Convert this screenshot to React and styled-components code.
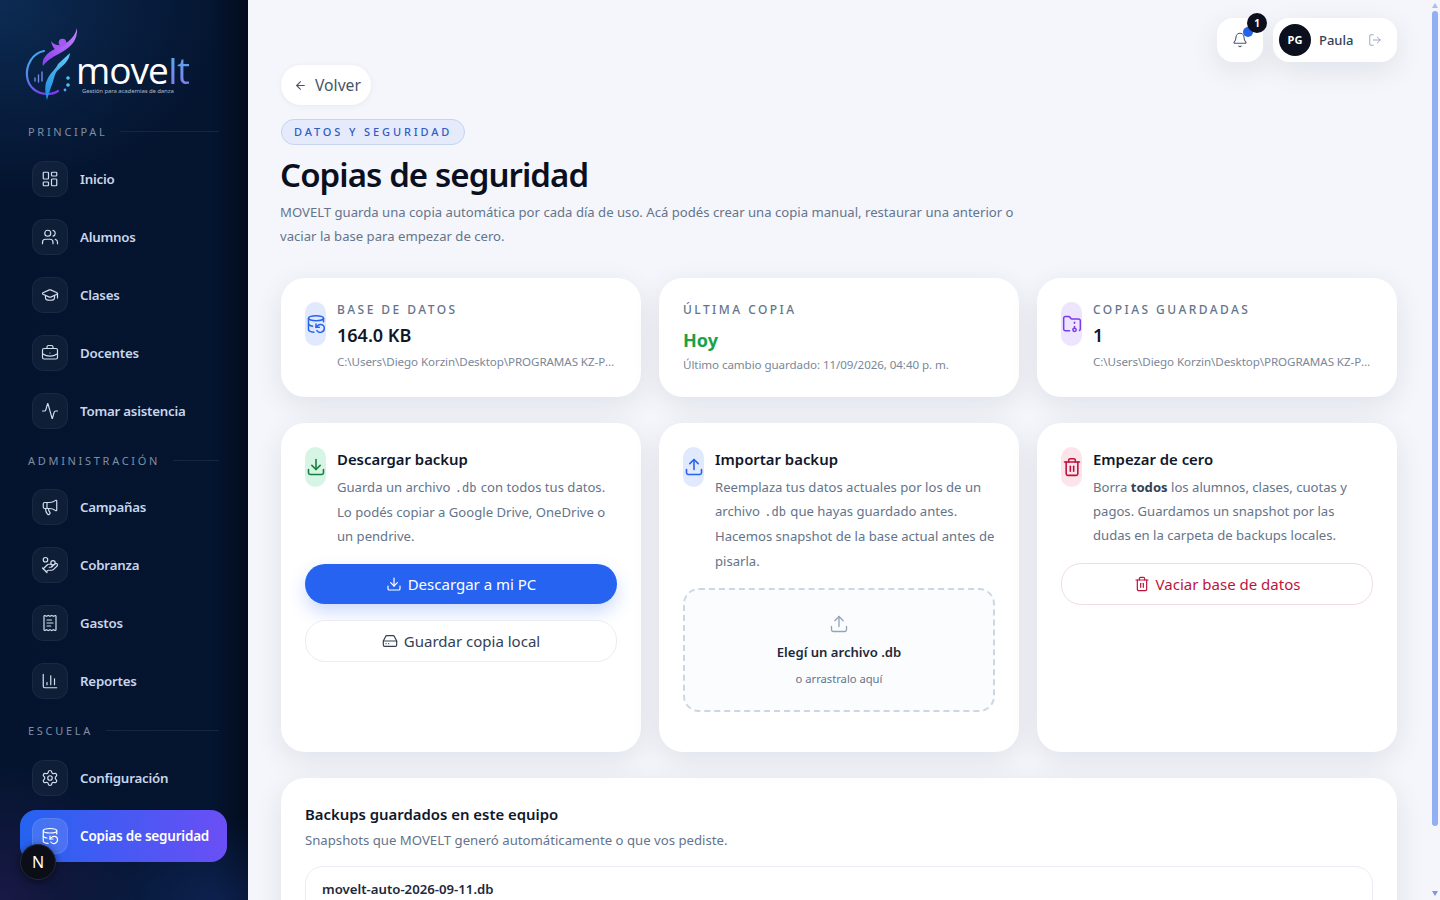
import React from "react";
import styled, { createGlobalStyle } from "styled-components";
import {
  LayoutDashboard, Users, GraduationCap, BriefcaseBusiness, Activity, Megaphone, HandCoins,
  ReceiptText, ChartColumn, Settings, DatabaseBackup, Bell, LogOut, ArrowLeft, Download,
  Upload, HardDrive, Trash2, FolderArchive,
} from "lucide-react";

const Global = createGlobalStyle`
  * { box-sizing: border-box; }
  html, body { margin: 0; height: 100%; overflow: hidden; }
  body { font-family: "Noto Sans", "Open Sans", sans-serif; background: #f4f6fb; color: #0f172a; }
`;

const Shell = styled.div`
  display: flex;
  height: 100vh;
  position: relative;
`;

const Sidebar = styled.aside`
  width: 248px;
  flex: none;
  height: 100vh;
  overflow: hidden;
  padding: 0 20px 0 20px;
  background:
    radial-gradient(220px 110px at 90% 100%, rgba(37, 70, 170, .26), transparent 75%),
    radial-gradient(170px 170px at 0% 100%, rgba(92, 42, 140, .24), transparent 80%),
    radial-gradient(280px 240px at 0% 0%, rgba(20, 66, 120, .50), transparent 80%),
    linear-gradient(90deg, #04142f 0%, #041530 85%, #020c1d 100%);
`;

const Brand = styled.div`
  height: 123px;
  margin: 0 -20px;
  padding: 26px 0 0 25px;
  display: flex;
  align-items: flex-start;
`;

const BrandMark = styled.svg`
  width: 56px;
  height: 76px;
  flex: none;
`;

const BrandWords = styled.div`
  margin: 25px 0 0 -5px;
  display: flex;
  flex-direction: column;
`;

const Wordmark = styled.div`
  font-family: "Open Sans", sans-serif;
  font-size: 37px;
  line-height: 38px;
  letter-spacing: -1px;
  color: #fff;
  font-weight: 500;
`;

const WordAccent = styled.span`
  background: linear-gradient(180deg, #45c0ee, #8f6bf2);
  -webkit-background-clip: text;
  background-clip: text;
  color: transparent;
`;

const Tagline = styled.div`
  font-size: 6px;
  line-height: 8px;
  margin: -2px 0 0 6px;
  letter-spacing: -.1px;
  color: #aeb8c9;
  white-space: nowrap;
`;

const SectionLabel = styled.div`
  display: flex;
  align-items: center;
  gap: 13px;
  height: 16px;
  margin: ${(p) => p.$mt}px 9px ${(p) => p.$mb}px 8px;
  font-size: 11px;
  letter-spacing: 2.7px;
  color: #7f8ea6;
  white-space: nowrap;
  &::after {
    content: "";
    flex: 1;
    height: 1px;
    background: #17263f;
  }
`;

const NavList = styled.nav`
  display: flex;
  flex-direction: column;
  gap: 6px;
`;

const NavItem = styled.div`
  height: 52px;
  width: 207px;
  padding: 0 12px;
  border-radius: 16px;
  display: flex;
  align-items: center;
  gap: 12px;
  font-size: ${(p) => (p.$active ? 13.5 : 13.3)}px;
  font-weight: 600;
  letter-spacing: -.22px;
  color: ${(p) => (p.$active ? "#fff" : "#c9d6ec")};
  background: ${(p) => (p.$active ? "linear-gradient(90deg, #2563f0, #6a4ff5)" : "transparent")};
`;

const NavIcon = styled.span`
  width: 36px;
  height: 36px;
  flex: none;
  border-radius: 12px;
  display: grid;
  place-items: center;
  background: ${(p) => (p.$active ? "rgba(255,255,255,.12)" : "rgba(255,255,255,.045)")};
  border: 1px solid ${(p) => (p.$active ? "rgba(255,255,255,.10)" : "rgba(255,255,255,.05)")};
  color: ${(p) => (p.$active ? "#fff" : "#d3ddee")};
`;

const DevBadge = styled.div`
  position: absolute;
  left: 20px;
  top: 844px;
  width: 36px;
  height: 36px;
  border-radius: 50%;
  background: #0b0d17;
  border: 1px solid #23283a;
  box-shadow: 0 2px 8px rgba(0, 0, 0, .5);
  color: #fff;
  display: grid;
  place-items: center;
  font-size: 16px;
`;

const Main = styled.main`
  flex: 1;
  min-width: 0;
  height: 100vh;
  overflow-y: auto;
  padding: 18px 43px 17px 32px;
`;

const ScrollTrack = styled.div`
  position: absolute;
  right: 0;
  top: 0;
  bottom: 0;
  width: 8px;
  display: flex;
  flex-direction: column;
  background: #f4f6fb;
  padding: 3px 2px 4px 0;
`;

const ScrollArrow = styled.span`
  flex: none;
  height: 5px;
  background: ${(p) => p.$color};
  clip-path: ${(p) => (p.$down ? "polygon(0 0, 100% 0, 50% 100%)" : "polygon(50% 0, 100% 100%, 0 100%)")};
`;

const ScrollThumb = styled.span`
  flex: none;
  height: 815px;
  margin-top: 3px;
  border-radius: 4px;
  background: #93aff3;
`;

const ScrollSpacer = styled.span`
  flex: 1;
`;

const TopBar = styled.div`
  display: flex;
  justify-content: flex-end;
  gap: 10px;
`;

const softShadow = "0 8px 30px rgba(15, 23, 42, .09)";

const BellButton = styled.div`
  position: relative;
  width: 46px;
  height: 44px;
  border-radius: 16px;
  background: #fff;
  box-shadow: ${softShadow};
  display: grid;
  place-items: center;
  color: #475569;
`;

const BellDot = styled.span`
  position: absolute;
  left: 26px;
  top: 9px;
  width: 10px;
  height: 10px;
  border-radius: 50%;
  background: #2563eb;
`;

const BellCount = styled.span`
  position: absolute;
  left: 30px;
  top: -5px;
  width: 20px;
  height: 20px;
  border-radius: 50%;
  background: #0b0f1e;
  color: #fff;
  font-size: 10px;
  font-weight: 700;
  display: grid;
  place-items: center;
`;

const UserPill = styled.div`
  width: 124px;
  height: 44px;
  border-radius: 16px;
  background: #fff;
  box-shadow: ${softShadow};
  display: flex;
  align-items: center;
  padding: 0 15px 0 6px;
  color: #94a3b8;
`;

const Avatar = styled.span`
  width: 32px;
  height: 32px;
  border-radius: 50%;
  background: #0b0f1e;
  color: #fff;
  font-size: 11px;
  font-weight: 700;
  padding-bottom: 1px;
  display: grid;
  place-items: center;
  flex: none;
`;

const UserName = styled.span`
  margin: -1px auto 0 8px;
  font-size: 13px;
  font-weight: 500;
  color: #334155;
`;

const BackButton = styled.div`
  margin: 3px 0 14px 1px;
  width: 90px;
  height: 40px;
  border-radius: 20px;
  background: #fff;
  box-shadow: 0 1px 6px rgba(15, 23, 42, .06);
  display: flex;
  align-items: center;
  gap: 8px;
  padding-left: 13px;
  font-size: 15.7px;
  color: #475569;
`;

const Eyebrow = styled.div`
  display: inline-block;
  margin-left: 1px;
  height: 26px;
  line-height: 24px;
  padding: 0 12px;
  border-radius: 13px;
  background: #e5ebfa;
  border: 1px solid #c6d4f2;
  font-size: 11px;
  font-weight: 500;
  letter-spacing: 2.88px;
  color: #2f5bc8;
  white-space: nowrap;
`;

const Title = styled.h1`
  margin: 7px 0 2px;
  font-size: 33px;
  line-height: 46px;
  font-weight: 600;
  letter-spacing: -.92px;
  color: #0b1020;
`;

const Lead = styled.p`
  margin: 0;
  width: 750px;
  font-size: 13.14px;
  line-height: 24.4px;
  color: #64748b;
`;

const Grid = styled.div`
  display: grid;
  grid-template-columns: repeat(3, 1fr);
  gap: 18px;
  margin: ${(p) => p.$mt}px 0 0 1px;
`;

const Card = styled.section`
  background: #fff;
  border-radius: 24px;
  box-shadow: ${softShadow};
  padding: 24px;
  display: flex;
  gap: 11px;
  min-width: 0;
`;

const StatCard = styled(Card)`
  height: 119px;
`;

const ActionCard = styled(Card)`
  height: 329px;
  flex-direction: column;
  gap: 0;
`;

const IconPill = styled.span`
  width: 21px;
  height: ${(p) => p.$h}px;
  flex: none;
  border-radius: 11px;
  display: grid;
  place-items: center;
  background: ${(p) => p.$bg};
  color: ${(p) => p.$fg};
  svg { flex: none; }
`;

const StatBody = styled.div`
  min-width: 0;
  flex: 1;
`;

const StatLabel = styled.div`
  font-size: 12px;
  line-height: 16px;
  font-weight: 500;
  letter-spacing: 2.45px;
  color: #64748b;
  white-space: nowrap;
`;

const StatValue = styled.div`
  margin-top: ${(p) => p.$mt || 5}px;
  font-size: 18px;
  line-height: 24px;
  font-weight: ${(p) => (p.$green ? 700 : 600)};
  color: ${(p) => (p.$green ? "#16a34a" : "#0f172a")};
`;

const StatNote = styled.div`
  margin-top: ${(p) => p.$mt || 6}px;
  font-size: 11.6px;
  line-height: 18px;
  letter-spacing: -.08px;
  color: #7b8798;
  white-space: nowrap;
  overflow: hidden;
  text-overflow: ellipsis;
`;

const ActionHead = styled.div`
  display: flex;
  gap: 11px;
`;

const ActionBody = styled.div`
  flex: 1;
  min-width: 0;
`;

const ActionTitle = styled.h2`
  margin: 0;
  font-size: 14.9px;
  line-height: 24px;
  font-weight: 600;
  color: #0f172a;
`;

const ActionText = styled.p`
  margin: 4px 0 0;
  font-size: 13.1px;
  line-height: 24.3px;
  color: #64748b;
  b { color: #334155; font-weight: 700; }
`;

const Mono = styled.code`
  font-family: "DejaVu Sans Mono", monospace;
  font-size: 12px;
  padding: 0 1px;
`;

const Button = styled.div`
  height: ${(p) => (p.$primary ? 40 : 42)}px;
  margin-top: ${(p) => p.$mt}px;
  flex: none;
  border-radius: 20px;
  display: flex;
  align-items: center;
  justify-content: center;
  gap: 6px;
  font-size: 15px;
  background: ${(p) => (p.$primary ? "#2563f0" : "#fff")};
  color: ${(p) => (p.$primary ? "#fff" : p.$danger ? "#be123c" : "#334155")};
  border: ${(p) => (p.$primary ? "none" : `1px solid ${p.$danger ? "#f2dbe2" : "#e9edf3"}`)};
  box-shadow: ${(p) => (p.$primary ? "0 8px 18px rgba(37, 99, 240, .24)" : "none")};
`;

const DropZone = styled.div`
  margin-top: 15px;
  height: 124px;
  border: 2px dashed #ccd7e6;
  border-radius: 16px;
  background: #fbfcfe;
  display: flex;
  flex-direction: column;
  align-items: center;
  padding-top: 24px;
  color: #94a3b8;
`;

const DropTitle = styled.div`
  margin-top: 8px;
  font-size: 13.1px;
  line-height: 20px;
  font-weight: 600;
  color: #1e293b;
`;

const DropHint = styled.div`
  margin-top: 9px;
  font-size: 11.2px;
  line-height: 16px;
  color: #64748b;
`;

const Panel = styled.section`
  margin: 26px 0 0 1px;
  background: #fff;
  border-radius: 24px;
  box-shadow: ${softShadow};
  padding: 24px;
`;

const PanelTitle = styled.h2`
  margin: 0;
  font-size: 14.9px;
  line-height: 24px;
  font-weight: 600;
`;

const PanelText = styled.p`
  margin: 2px 0 14px;
  font-size: 13.18px;
  line-height: 24px;
  color: #64748b;
`;

const BackupRow = styled.div`
  border: 1px solid #e9edf3;
  border-radius: 18px;
  padding: 12px 16px;
  height: 58px;
`;

const BackupName = styled.div`
  font-size: 13.2px;
  line-height: 20px;
  font-weight: 600;
  color: #1e293b;
`;

const BackupMeta = styled.div`
  font-size: 11.4px;
  line-height: 16px;
  color: #7b8798;
`;

const LogoMark = () => (
  <BrandMark viewBox="0 0 56 76" fill="none">
    <defs>
      <linearGradient id="lgArc" x1="0" y1="0" x2="0.6" y2="1">
        <stop offset="0" stopColor="#38bdf0" />
        <stop offset="1" stopColor="#7c3aed" />
      </linearGradient>
      <linearGradient id="lgBody" x1="0.6" y1="0" x2="0.3" y2="1">
        <stop offset="0" stopColor="#60c5f5" />
        <stop offset="1" stopColor="#1d8fe0" />
      </linearGradient>
      <linearGradient id="lgSwoosh" x1="1" y1="0" x2="0" y2="1">
        <stop offset="0" stopColor="#c084fc" />
        <stop offset="1" stopColor="#8b3df0" />
      </linearGradient>
    </defs>
    <path d="M19 25C7 27 1 40 2 50c1 11 10 18 20 18 4 0 8-1 11-3" stroke="url(#lgArc)" strokeWidth="2.2" strokeLinecap="round" />
    <path d="M45 27c-1 9-8 13-13 18-3 4-3 10-6 16l-4 13c-2-8-3-15 1-22 3-6 8-9 10-14l12-11z" fill="url(#lgBody)" />
    <path d="M52 2c1 12-6 19-15 24-7 4-14 7-19 14-2-7 4-13 12-17 10-5 19-9 22-21z" fill="url(#lgSwoosh)" />
    <path d="M26 15c3 4 7 5 12 4l-6 6c-3-2-5-5-6-10z" fill="#a855f7" />
    <circle cx="37.5" cy="16.5" r="3.8" fill="#a855f7" />
    <path d="M10 55v-3M13.5 56v-7M17 55v-9" stroke="#6f8ae8" strokeWidth="1.4" strokeLinecap="round" />
    <circle cx="43" cy="52" r="1.8" fill="#4fc3f7" />
    <circle cx="43" cy="59" r="1.8" fill="#4fc3f7" />
    <circle cx="40" cy="64" r="1.4" fill="#4fa4f7" />
  </BrandMark>
);

const sections = [
  { label: "PRINCIPAL", mt: 0, mb: 14, items: [["Inicio", LayoutDashboard], ["Alumnos", Users], ["Clases", GraduationCap], ["Docentes", BriefcaseBusiness], ["Tomar asistencia", Activity]] },
  { label: "ADMINISTRACIÓN", mt: 15, mb: 13, items: [["Campañas", Megaphone], ["Cobranza", HandCoins], ["Gastos", ReceiptText], ["Reportes", ChartColumn]] },
  { label: "ESCUELA", mt: 15, mb: 14, items: [["Configuración", Settings], ["Copias de seguridad", DatabaseBackup, true]] },
];

const PATH = "C:\\Users\\Diego Korzin\\Desktop\\PROGRAMAS KZ-PROYECTOS\\movelt\\data";

export default function App() {
  return (
    <Shell>
      <Global />
      <Sidebar>
        <Brand>
          <LogoMark />
          <BrandWords>
            <Wordmark>move<WordAccent>It</WordAccent></Wordmark>
            <Tagline>Gestión para academias de danza</Tagline>
          </BrandWords>
        </Brand>
        {sections.map((s) => (
          <div key={s.label}>
            <SectionLabel $mt={s.mt} $mb={s.mb}>{s.label}</SectionLabel>
            <NavList>
              {s.items.map(([name, Icon, active]) => (
                <NavItem key={name} $active={active}>
                  <NavIcon $active={active}><Icon size={18} strokeWidth={1.6} /></NavIcon>
                  {name}
                </NavItem>
              ))}
            </NavList>
          </div>
        ))}
      </Sidebar>
      <DevBadge>N</DevBadge>
      <Main>
        <TopBar>
          <BellButton>
            <Bell size={16} strokeWidth={1.6} />
            <BellDot />
            <BellCount>1</BellCount>
          </BellButton>
          <UserPill>
            <Avatar>PG</Avatar>
            <UserName>Paula</UserName>
            <LogOut size={14} strokeWidth={1.6} />
          </UserPill>
        </TopBar>
        <BackButton><ArrowLeft size={13} strokeWidth={2} />Volver</BackButton>
        <Eyebrow>DATOS Y SEGURIDAD</Eyebrow>
        <Title>Copias de seguridad</Title>
        <Lead>
          MOVELT guarda una copia automática por cada día de uso. Acá podés crear una copia manual, restaurar una anterior o vaciar la base para empezar de cero.
        </Lead>

        <Grid $mt={29}>
          <StatCard>
            <IconPill $h={44} $bg="#e0e9fd" $fg="#2563eb"><DatabaseBackup size={20} strokeWidth={1.8} /></IconPill>
            <StatBody>
              <StatLabel>BASE DE DATOS</StatLabel>
              <StatValue>164.0 KB</StatValue>
              <StatNote>{PATH}</StatNote>
            </StatBody>
          </StatCard>
          <StatCard>
            <StatBody>
              <StatLabel>ÚLTIMA COPIA</StatLabel>
              <StatValue $green $mt={10}>Hoy</StatValue>
              <StatNote $mt={4}>Último cambio guardado: 11/09/2026, 04:40 p. m.</StatNote>
            </StatBody>
          </StatCard>
          <StatCard>
            <IconPill $h={44} $bg="#ede5fd" $fg="#7c3aed"><FolderArchive size={20} strokeWidth={1.8} /></IconPill>
            <StatBody>
              <StatLabel>COPIAS GUARDADAS</StatLabel>
              <StatValue>1</StatValue>
              <StatNote>{PATH}</StatNote>
            </StatBody>
          </StatCard>
        </Grid>

        <Grid $mt={26}>
          <ActionCard>
            <ActionHead>
              <IconPill $h={40} $bg="#d6f5e5" $fg="#15803d"><Download size={20} strokeWidth={1.9} /></IconPill>
              <ActionBody>
                <ActionTitle>Descargar backup</ActionTitle>
                <ActionText>Guarda un archivo <Mono>.db</Mono> con todos tus datos. Lo podés copiar a Google Drive, OneDrive o un pendrive.</ActionText>
              </ActionBody>
            </ActionHead>
            <Button $primary $mt={15}><Download size={16} strokeWidth={1.8} />Descargar a mi PC</Button>
            <Button $mt={16}><HardDrive size={16} strokeWidth={1.8} />Guardar copia local</Button>
          </ActionCard>
          <ActionCard>
            <ActionHead>
              <IconPill $h={40} $bg="#e0e9fd" $fg="#2563eb"><Upload size={20} strokeWidth={1.9} /></IconPill>
              <ActionBody>
                <ActionTitle>Importar backup</ActionTitle>
                <ActionText>Reemplaza tus datos actuales por los de un archivo <Mono>.db</Mono> que hayas guardado antes. Hacemos snapshot de la base actual antes de pisarla.</ActionText>
              </ActionBody>
            </ActionHead>
            <DropZone>
              <Upload size={20} strokeWidth={1.6} />
              <DropTitle>Elegí un archivo .db</DropTitle>
              <DropHint>o arrastralo aquí</DropHint>
            </DropZone>
          </ActionCard>
          <ActionCard>
            <ActionHead>
              <IconPill $h={40} $bg="#fde4ea" $fg="#be123c"><Trash2 size={20} strokeWidth={1.9} /></IconPill>
              <ActionBody>
                <ActionTitle>Empezar de cero</ActionTitle>
                <ActionText>Borra <b>todos</b> los alumnos, clases, cuotas y pagos. Guardamos un snapshot por las dudas en la carpeta de backups locales.</ActionText>
              </ActionBody>
            </ActionHead>
            <Button $danger $mt={15}><Trash2 size={16} strokeWidth={1.8} />Vaciar base de datos</Button>
          </ActionCard>
        </Grid>

        <Panel>
          <PanelTitle>Backups guardados en este equipo</PanelTitle>
          <PanelText>Snapshots que MOVELT generó automáticamente o que vos pediste.</PanelText>
          <BackupRow>
            <BackupName>movelt-auto-2026-09-11.db</BackupName>
            <BackupMeta>164.0 KB · 11/09/2026, 04:40 p. m.</BackupMeta>
          </BackupRow>
        </Panel>
      </Main>
      <ScrollTrack>
        <ScrollArrow $color="#a9bdf0" />
        <ScrollThumb />
        <ScrollSpacer />
        <ScrollArrow $down $color="#7f98dc" />
      </ScrollTrack>
    </Shell>
  );
}
